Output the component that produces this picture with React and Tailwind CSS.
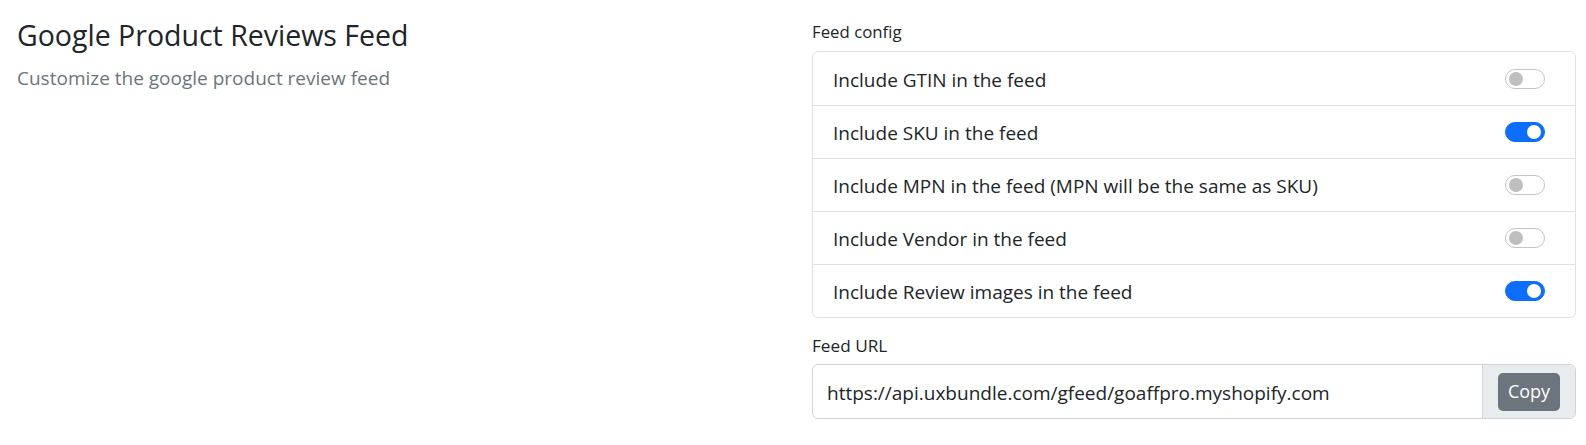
const options = [
  { label: 'Include GTIN in the feed', on: false },
  { label: 'Include SKU in the feed', on: true },
  { label: 'Include MPN in the feed (MPN will be the same as SKU)', on: false },
  { label: 'Include Vendor in the feed', on: false },
  { label: 'Include Review images in the feed', on: true },
]

function Switch({ on }) {
  return (
    <span
      className={`flex h-[20px] w-[40px] items-center rounded-full border px-[3px] ${
        on ? 'justify-end border-[#0d6efd] bg-[#0d6efd]' : 'justify-start border-[#c4c4c4] bg-white'
      }`}
    >
      <span className={`h-[14px] w-[14px] rounded-full ${on ? 'bg-white' : 'bg-[#bfbfbf]'}`} />
    </span>
  )
}

export default function App() {
  return (
    <div className="flex min-h-[445px] bg-white text-[#212529]" style={{ fontFamily: '"Open Sans", "Noto Sans", sans-serif' }}>
      <div className="w-[812px] pl-[17px] pt-[16px]">
        <h2 className="text-[28.5px] leading-[38px]">Google Product Reviews Feed</h2>
        <p className="mt-[11px] text-[19px] leading-[26px] text-[#6c757d]">Customize the google product review feed</p>
      </div>

      <div className="w-[764px] pt-[19px]">
        <div className="text-[16.8px] leading-[25px]">Feed config</div>
        <div className="mt-[7px] rounded-[6px] border border-[#dee2e6]">
          {options.map((o, i) => (
            <div
              key={o.label}
              className={`flex h-[53px] items-center justify-between pl-[20px] pr-[30px] ${i ? 'border-t border-[#dee2e6]' : ''}`}
            >
              <span className="pt-[3px] text-[19px]">{o.label}</span>
              <Switch on={o.on} />
            </div>
          ))}
        </div>

        <div className="mt-[15px] text-[17.2px] leading-[25px]">Feed URL</div>
        <div className="mt-[6px] flex h-[55px] rounded-[6px] border border-[#ced4da]">
          <div className="flex flex-1 items-center pl-[14px] pt-[3px] text-[19px]">
            https://api.uxbundle.com/gfeed/goaffpro.myshopify.com
          </div>
          <div className="flex items-center rounded-r-[6px] border-l border-[#ced4da] bg-[#e9ecef] px-[15px]">
            <button className="h-[38px] w-[62px] rounded-[5px] bg-[#6c757d] text-[18px] text-white">Copy</button>
          </div>
        </div>
      </div>
    </div>
  )
}
